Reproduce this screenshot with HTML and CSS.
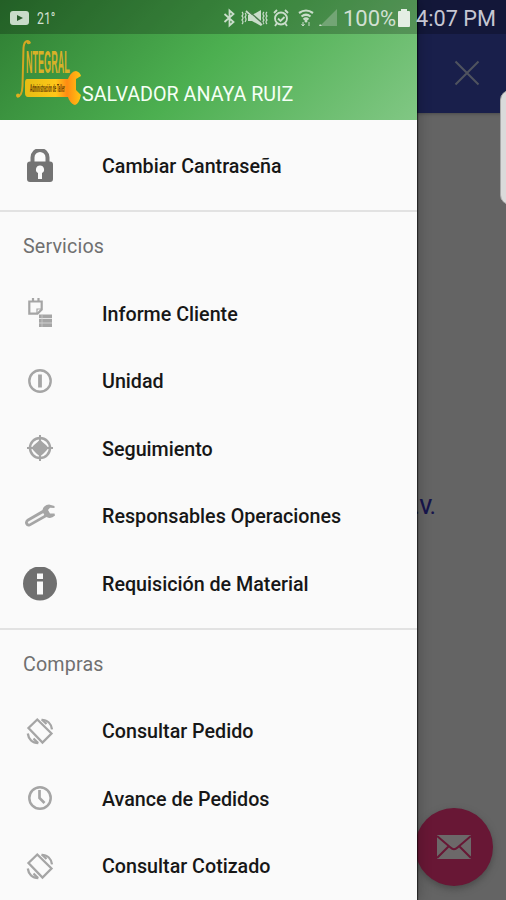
FILE: index.html
```html
<!DOCTYPE html>
<html lang="es">
<head>
<meta charset="utf-8">
<meta name="viewport" content="width=device-width">
<title>Integral</title>
<link rel="stylesheet" href="styles.css">
</head>
<body>
<svg class="defs" aria-hidden="true">
  <symbol id="rotate" viewBox="0 0 34 34">
    <g fill="none" stroke="#a5a5a5" stroke-width="2.3">
      <path d="M14.3 4.500 5.500 13 19.500 27.500 28.500 18.500Z"/>
      <path d="M18.500 4.800c6 0 9.800 4 10.500 9.500M15.300 28c-6 0-9.800-4-10.500-9.500"/>
      <path d="M19 4.500 23.500 9M15 28 10.500 23.500"/>
    </g>
  </symbol>
</svg>
<main class="screen">
  <section class="page">
    <div class="toolbar">
      <svg class="close" viewBox="0 0 26 26"><path d="M1.500 1.500 24.500 24.500M24.500 1.500 1.500 24.500" fill="none" stroke="#50535f" stroke-width="2"/></svg>
    </div>
    <div class="company">.V.</div>
    <button class="fab" aria-label="Correo">
      <svg width="34" height="24" viewBox="0 0 34 24"><path fill="#6c6869" d="M0 0H34V24H0Z"/><path d="M0 1 13.500 12.500Q17 16 20.500 12.500L34 1M0 23 11.500 11.500M34 23 22.500 11.500" fill="none" stroke="#681735" stroke-width="2"/></svg>
    </button>
  </section>
  <aside class="drawer">
    <header class="profile">
      <svg class="logo" width="68" height="68" viewBox="0 0 68 68">
        <defs><linearGradient id="gold" x2="1"><stop stop-color="#e5bd13"/><stop offset=".55" stop-color="#ffc719"/><stop offset=".75" stop-color="#ff8b13"/><stop offset="1" stop-color="#ffc512"/></linearGradient></defs>
        <path d="M15 5.500C14 1.500 9 2 8.500 10L7.500 48Q7 59 2 58.500" fill="none" stroke="#d3a722" stroke-width="2"/>
        <circle cx="13.500" cy="4.500" r="1.800" fill="#d3a722"/><circle cx="3" cy="57.500" r="2" fill="#e0af1e"/>
        <text class="logo-name" transform="translate(11 35) scale(.283 1)">NTEGRAL</text>
        <path fill="url(#gold)" d="M12 41H53C55 36 58 33 61 33Q65 34 66 38L61 41V52L66 57Q64 66 60 67C56 66 54 62 53 59H13Q10 59 10 55V45Q10 41 12 41Z"/>
        <text class="logo-caption" transform="translate(15 53.500) scale(.3 1)">Administración de Taller</text>
      </svg>
      <span class="name">SALVADOR ANAYA RUIZ</span>
    </header>
    <nav>
      <ul class="group">
        <li class="row"><svg viewBox="0 0 34 34"><path d="M9.500 15V8.500a7.500 7.500 0 0 1 15 0V15" fill="none" stroke="#777" stroke-width="4"/><rect x="4" y="12.500" width="26" height="20.500" rx="3" fill="#737373"/><path fill="#fafafa" d="M17 16.500a4 4 0 0 1 2 7.500V30h-4v-6A4 4 0 0 1 17 16.500Z"/></svg><span>Cambiar Cantraseña</span></li>
      </ul>
      <ul class="group">
        <li class="heading">Servicios</li>
        <li class="row"><svg viewBox="0 0 34 34"><g fill="none" stroke="#a5a5a5" stroke-width="2.200"><path d="M6.300 4.500H18.700V12.500L14.500 16.700H6.300ZM10 1V5M15.500 1V5"/><path d="M18.500 12H14V16.500" stroke-width="1.200"/></g><path fill="#a5a5a5" d="M16 17.500h13v3.700H16ZM16 22h13v3.700H16ZM16 26.300h13v3.700H16Z"/><path d="M19 18V30" stroke="#d0d0d0" stroke-width=".7"/></svg><span>Informe Cliente</span></li>
        <li class="row"><svg viewBox="0 0 34 34"><circle cx="17" cy="16" r="10.700" fill="none" stroke="#a5a5a5" stroke-width="2.400"/><path d="M17 9.500V22.500" stroke="#a5a5a5" stroke-width="3.800"/></svg><span>Unidad</span></li>
        <li class="row"><svg viewBox="0 0 34 34"><circle cx="17" cy="16" r="10" fill="none" stroke="#a5a5a5" stroke-width="2.500"/><path d="M17 3V29M4 16H30" stroke="#a5a5a5" stroke-width="2"/><path d="M17 7.500 20 10.500 23 13 25.500 16 23 19 20 22 17 24.500 14 22 11 19 8.500 16 11 13 14 10.500Z" fill="#a5a5a5"/></svg><span>Seguimiento</span></li>
        <li class="row"><svg viewBox="0 0 34 34"><path d="M31.500 6 26 4.500Q20.500 5 19.500 10L4 19Q1 21.500 2.500 24.500T7.500 26L23.500 17Q28 19.500 32 15.500L31.500 13.500 27 13.500 25 10 27 7.800 31.500 8Z" fill="#a5a5a5"/><path d="M6 22.500 20 14.500" stroke="#f5f5f5" stroke-width="2.300" stroke-linecap="round"/></svg><span>Responsables Operaciones</span></li>
        <li class="row"><svg viewBox="0 0 34 34"><circle cx="17" cy="16.500" r="17" fill="#707070"/><path fill="#fafafa" d="M14 6.500h6V12h-6ZM14 14.500h6v13h-6Z"/></svg><span>Requisición de Material</span></li>
      </ul>
      <ul class="group">
        <li class="heading">Compras</li>
        <li class="row"><svg><use href="#rotate"/></svg><span>Consultar Pedido</span></li>
        <li class="row"><svg viewBox="0 0 34 34"><circle cx="17" cy="16" r="10.700" fill="none" stroke="#a5a5a5" stroke-width="2.500"/><path d="M16.500 8V16L21.500 21" fill="none" stroke="#a5a5a5" stroke-width="2.700"/></svg><span>Avance de Pedidos</span></li>
        <li class="row"><svg><use href="#rotate"/></svg><span>Consultar Cotizado</span></li>
      </ul>
    </nav>
  </aside>
  <div class="status">
    <svg class="video" width="19" height="14" viewBox="0 0 19 14"><rect width="19" height="14" rx="3" fill="#c9dbca"/><path d="m7 4 6 3-6 3Z" fill="#295b2c"/></svg>
    <span class="temp">21°</span>
    <svg class="indicators" width="116" height="20" viewBox="0 0 116 20" fill="none" stroke="#c9ddca" stroke-width="1.800">
      <path d="m1.500 6 9 8-4 3.500V2.500l4 3.500-9 8"/>
      <path d="M19 4q2 2 0 4 2 2 0 4 2 2 0 4M22 5q2 2 0 4 2 2 0 5M41 4q-2 2 0 4-2 2 0 4-2 2 0 4M44 4q-2 2 0 4-2 2 0 4-2 2 0 4" stroke-width="1.200"/>
      <path d="M25 7h4l9-5v16l-9-5h-4Z" fill="#c9ddca" stroke="none"/><path d="m23 3 16 14" stroke-width="1.800"/><path d="m25 2.500 15 13" stroke="#4c7c4e" stroke-width="1.400"/>
      <circle cx="58" cy="10.500" r="6"/><path d="m55 10.500 2.500 2.500 4-4M51 5l3-3M65 5l-3-3M54 15l-2 3M62 15l2 3"/>
      <path d="M76 5q7-5 14 0M78.500 8.500q4.500-3.500 9 0M80.500 11.500q2.500-2 5 0" stroke-width="2.200"/><circle cx="83" cy="13" r="1.500" fill="#c9ddca" stroke="none"/><path d="M80 14v4m-1.500-2 1.500 2 1.500-2M86 18v-4" stroke-width="1"/>
      <path d="M114 1V18H97Z" fill="#73a575" stroke="none"/><path d="m97 16 2 2h-3Z" fill="#c9ddca" stroke="none"/>
    </svg>
    <span class="percent">100%</span>
    <svg class="battery" width="12" height="18" viewBox="0 0 12 18"><path fill="#e4eee4" d="M3 0h6v2h2q1 0 1 1v14q0 1-1 1H1q-1 0-1-1V3q0-1 1-1h2Z"/></svg>
    <span class="time">4:07 PM</span>
  </div>
  <div class="edge-handle"></div>
</main>
</body>
</html>
```
FILE: styles.css
```css
* { box-sizing: border-box; }
body { margin: 0; font-family: Roboto, "Liberation Sans", sans-serif; }
ul { margin: 0; padding: 0; list-style: none; }
.defs { position: absolute; width: 0; height: 0; }
.screen { position: relative; width: 506px; height: 900px; overflow: hidden; background: #646464; }
.page { height: 100%; }
.toolbar { height: 113px; padding: 60px 26px 0 0; text-align: right; background: #191f4b; box-shadow: 0 1px 3px #4b4b4b; }
.close { width: 26px; height: 26px; }
.company { position: absolute; left: 414px; top: 496px; font-size: 19.5px; line-height: 24px; font-weight: 500; color: #17154c; }
.fab { position: absolute; left: 415px; top: 808px; width: 78px; height: 78px; padding: 0; border: 0; border-radius: 50%; background: #681735; box-shadow: 0 3px 7px #4a4a4a; display: grid; place-items: center; }
.drawer { position: absolute; inset: 0 auto 0 0; width: 417px; background: #fafafa; box-shadow: 1px 0 1px rgba(0, 0, 0, .55), 2px 0 12px rgba(0, 0, 0, .22); }
.profile { height: 120px; padding: 38px 0 0 15px; display: flex; background: linear-gradient(135deg, #2e7d32 0%, #4caf50 50%, #81c784 100%); }
.logo { flex: none; overflow: visible; }
.logo-name { font: 700 32px "Liberation Sans", sans-serif; fill: #d9b127; }
.logo-caption { font: 700 10px "Liberation Sans", sans-serif; fill: #5c3300; }
.name { margin: 44.5px 0 0 -1px; font-size: 19.7px; line-height: 24px; color: #f5fff5; white-space: nowrap; }
.group { padding: 1.5px 0 11px; border-bottom: 2px solid #e2e2e2; }
.group:first-child { padding-top: 12.5px; padding-bottom: 9.5px; }
.group:nth-child(2) { padding-bottom: 10px; }
.group:last-child { border: 0; padding-top: .3px; }
.row, .heading { height: 67.5px; display: flex; align-items: center; padding-left: 23px; }
.row { color: #171717; font-size: 19.7px; font-weight: 500; }
.row svg { width: 34px; height: 34px; margin-right: 45px; flex: none; }
.row span { white-space: nowrap; }
.heading { color: #707070; font-size: 19.7px; letter-spacing: .15px; }
.status { position: absolute; inset: 0 0 auto 0; height: 34px; padding: 2px 0 0 10px; display: flex; align-items: center; background: rgba(0, 0, 0, .23); color: #d2e0d3; white-space: nowrap; }
.temp { margin-left: 8px; width: 17px; font-size: 17px; transform: scaleX(.72); transform-origin: left; }
.indicators { margin-left: 169px; }
.percent { margin-left: 4px; width: 51px; font-size: 22px; }
.battery { margin-left: 4px; }
.time { margin-left: 6px; font-size: 21.7px; color: #c6c7d3; }
.edge-handle { position: absolute; left: 500px; top: 90px; width: 20px; height: 115px; border-radius: 14px; background: #dadada; border: 1px solid #a7a7a7; }
```
